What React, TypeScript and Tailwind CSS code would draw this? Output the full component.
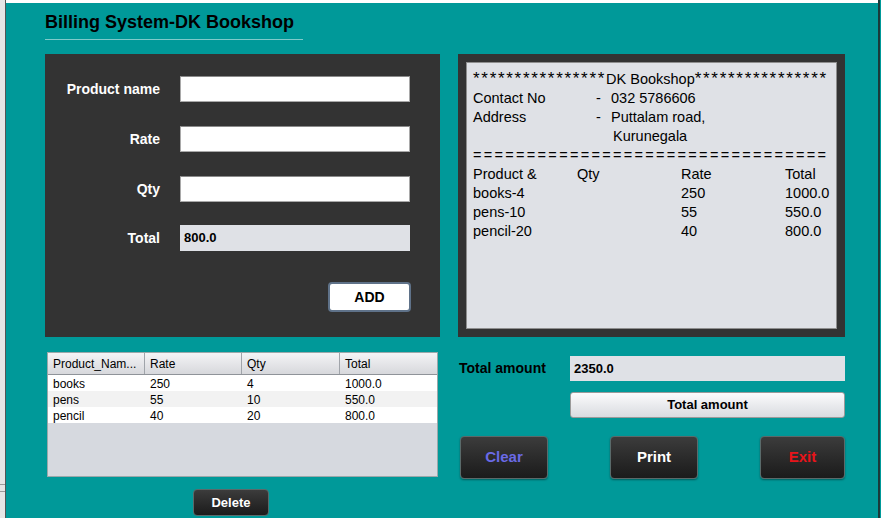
import React from "react";

const font = { fontFamily: '"Liberation Sans", Arial, sans-serif' };

const rows = [
  { name: "books", rate: "250", qty: "4", total: "1000.0" },
  { name: "pens", rate: "55", qty: "10", total: "550.0" },
  { name: "pencil", rate: "40", qty: "20", total: "800.0" },
];

const Field: React.FC<{ label: string; value?: string; filled?: boolean }> = ({ label, value, filled }) => (
  <div className="flex items-center h-[26px]">
    <span className="w-[115px] text-right text-white font-bold text-[14px]">{label}</span>
    <div
      className={`ml-[20px] w-[230px] h-[26px] flex items-center px-[4px] text-[13px] font-bold text-black ${
        filled ? "bg-[#dfe1e6]" : "bg-white border border-[#a9a9a9] border-t-[#8a8a8a]"
      }`}
    >
      {value}
    </div>
  </div>
);

const DarkButton: React.FC<{ label: string; color: string; w: string }> = ({ label, color, w }) => (
  <button
    className={`${w} h-[43px] rounded-[4px] border border-[#5a6a6a] bg-gradient-to-b from-[#3c3c3c] to-[#1b1b1b] font-bold text-[15px] ${color} shadow-[0_1px_2px_rgba(0,0,0,0.4)]`}
  >
    {label}
  </button>
);

export default function App() {
  return (
    <div className="flex w-[881px] h-[518px] overflow-hidden bg-[#009999]" style={font}>
      {/* left window strip */}
      <div className="w-[6px] h-full bg-[#e6e6e6] border-r border-[#555] flex flex-col">
        <div className="mt-[484px] h-px bg-[#9a9a9a]" />
        <div className="mt-[6px] h-px bg-[#9a9a9a]" />
      </div>

      <div className="flex-1 flex flex-col">
        <div className="h-[3px] bg-white" />
        <div className="pl-[39px]">
          {/* title */}
          <div className="w-[258px] border-b border-[#7fcaca] pt-[8px] pb-[6px]">
            <h1 className="text-[18px] font-bold text-black leading-[22px]">Billing System-DK Bookshop</h1>
          </div>

          <div className="flex gap-[18px] mt-[14px]">
            {/* left column */}
            <div className="w-[395px] flex flex-col">
              <div className="h-[283px] bg-[#333333] pt-[22px] flex flex-col">
                <div className="flex flex-col gap-[24px]">
                  <Field label="Product name" />
                  <Field label="Rate" />
                  <Field label="Qty" />
                  <div className="-mt-[1px]">
                    <Field label="Total" value="800.0" filled />
                  </div>
                </div>
                <div className="flex justify-end pr-[29px] mt-[31px]">
                  <button className="w-[83px] h-[30px] bg-white rounded-[4px] border-2 border-[#5f7289] text-[14px] font-bold text-black">
                    ADD
                  </button>
                </div>
              </div>

              {/* table */}
              <div className="mt-[15px] ml-[2px] w-[391px] h-[125px] bg-[#d6d9df] border border-[#9aa8aa] text-[12px] text-black">
                <div className="grid grid-cols-[97px_97px_98px_1fr] h-[22px] bg-gradient-to-b from-[#f4f4f6] to-[#d7d8dc] border-b border-[#8f9399]">
                  {["Product_Nam...", "Rate", "Qty", "Total"].map((h) => (
                    <div key={h} className="flex items-center pl-[5px] border-r border-[#a0a4aa] last:border-r-0">
                      {h}
                    </div>
                  ))}
                </div>
                {rows.map((r, i) => (
                  <div
                    key={r.name}
                    className={`grid grid-cols-[97px_97px_98px_1fr] h-[16px] items-center ${
                      i % 2 === 1 ? "bg-[#f2f2f2]" : "bg-white"
                    }`}
                  >
                    <div className="pl-[5px]">{r.name}</div>
                    <div className="pl-[5px]">{r.rate}</div>
                    <div className="pl-[5px]">{r.qty}</div>
                    <div className="pl-[5px]">{r.total}</div>
                  </div>
                ))}
              </div>

              <div className="mt-[12px] ml-[148px]">
                <button className="w-[76px] h-[27px] rounded-[4px] border border-[#5a6a6a] bg-gradient-to-b from-[#3c3c3c] to-[#1b1b1b] text-white font-bold text-[13px]">
                  Delete
                </button>
              </div>
            </div>

            {/* right column */}
            <div className="w-[387px] flex flex-col">
              <div className="h-[283px] bg-[#333333] p-[8px]">
                <div className="h-full bg-[#dfe1e6] border border-[#8e8e8e] px-[6px] pt-[6px] text-[14.5px] leading-[19px] text-black">
                  <div className="flex items-baseline whitespace-nowrap h-[19px]">
                    <span className="shrink-0 text-[17px] tracking-[1.7px]">****************</span>
                    <span className="shrink-0">DK Bookshop</span>
                    <span className="shrink-0 text-[17px] tracking-[1.7px]">****************</span>
                  </div>
                  <div className="flex pt-[1px]">
                    <span className="w-[123px]">Contact No</span>
                    <span className="w-[15px]">-</span>
                    <span>032 5786606</span>
                  </div>
                  <div className="flex">
                    <span className="w-[123px]">Address</span>
                    <span className="w-[15px]">-</span>
                    <span>Puttalam road,</span>
                  </div>
                  <div className="pl-[140px]">Kurunegala</div>
                  <div className="tracking-[2.3px] whitespace-nowrap overflow-hidden">=================================</div>
                  <div className="grid grid-cols-[104px_104px_104px_1fr]">
                    <span>Product &amp;</span>
                    <span>Qty</span>
                    <span>Rate</span>
                    <span>Total</span>
                  </div>
                  {rows.map((r) => (
                    <div key={r.name} className="grid grid-cols-[208px_104px_1fr]">
                      <span>
                        {r.name}-{r.qty}
                      </span>
                      <span>{r.rate}</span>
                      <span>{r.total}</span>
                    </div>
                  ))}
                </div>
              </div>

              <div className="flex items-center mt-[19px] h-[25px]">
                <span className="w-[112px] pl-[1px] font-bold text-[14px] text-black">Total amount</span>
                <div className="flex-1 h-[25px] bg-[#dfe1e6] flex items-center px-[4px] font-bold text-[13px] text-black">
                  2350.0
                </div>
              </div>
              <div className="flex mt-[11px]">
                <div className="w-[112px]" />
                <button className="flex-1 h-[26px] rounded-[3px] border border-[#9a9a9a] bg-gradient-to-b from-[#fbfbfc] to-[#d9dbe0] font-bold text-[13px] text-black">
                  Total amount
                </button>
              </div>
              <div className="flex justify-between mt-[18px] pl-[2px]">
                <DarkButton label="Clear" color="text-[#6a6ae6]" w="w-[88px]" />
                <DarkButton label="Print" color="text-white" w="w-[88px]" />
                <DarkButton label="Exit" color="text-[#e8141a]" w="w-[85px]" />
              </div>
            </div>
          </div>
        </div>
      </div>

      {/* right edge */}
      <div className="w-[2px] h-full bg-[#1a3a3a]" />
      <div className="w-px h-full bg-[#009999]" />
    </div>
  );
}
